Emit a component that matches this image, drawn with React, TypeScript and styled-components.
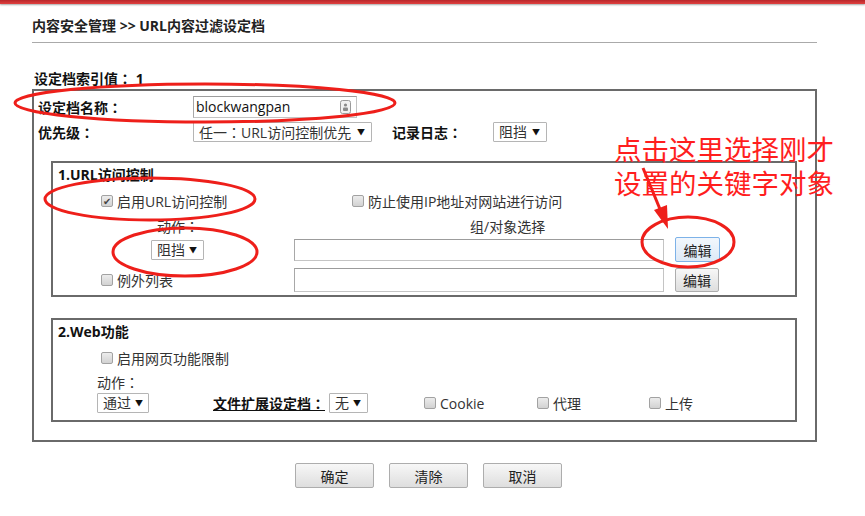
import React from 'react';
import styled, { createGlobalStyle } from 'styled-components';

const GlobalStyle = createGlobalStyle`
  html, body {
    margin: 0;
    padding: 0;
    background: #fff;
  }
  body {
    font-family: "Open Sans", "Noto Sans CJK SC", sans-serif;
    font-size: 14px;
    color: #222;
  }
`;

const Screen = styled.div`
  position: relative;
  width: 865px;
  height: 516px;
  overflow: hidden;
  background: #fff;
`;

const RedBar = styled.div`
  height: 4px;
  background: linear-gradient(#b8262a, #e0403f);
  box-shadow: 0 1px 2px rgba(0, 0, 0, 0.35);
`;

const Page = styled.div`
  width: 785px;
  margin-left: 32px;
`;

const Title = styled.div`
  margin-top: 12px;
  padding-bottom: 6px;
  line-height: 20px;
  font-size: 14px;
  font-weight: bold;
  color: #222;
  border-bottom: 1px solid #aaa;
`;

const IndexLine = styled.div`
  margin-top: 25px;
  padding-left: 2px;
  line-height: 20px;
  font-weight: bold;
  color: #111;
  white-space: pre;
`;

/* full-width colon centred in its box, as the reference font draws it */
const Colon = styled.span`
  font-family: "Noto Sans CJK TC", sans-serif;
`;

const OuterBox = styled.div`
  box-sizing: border-box;
  width: 785px;
  border: 2px solid #6a6a6a;
  padding: 5px 0 18px 4px;
`;

const Row = styled.div<{ $h?: number; $top?: number; $left?: number }>`
  display: flex;
  align-items: center;
  height: ${(p) => p.$h ?? 20}px;
  margin-top: ${(p) => p.$top ?? 0}px;
  padding-left: ${(p) => p.$left ?? 0}px;
`;

const Label = styled.span<{ $w?: number; $ml?: number; $underline?: boolean }>`
  flex: none;
  width: ${(p) => (p.$w ? `${p.$w}px` : 'auto')};
  margin-left: ${(p) => p.$ml ?? 0}px;
  font-weight: bold;
  color: #111;
  white-space: nowrap;
  text-decoration: ${(p) => (p.$underline ? 'underline' : 'none')};
`;

const Text = styled.span<{ $ml?: number }>`
  margin-left: ${(p) => p.$ml ?? 0}px;
  color: #333;
  white-space: nowrap;
`;

const TextInput = styled.div<{ $w: number; $h?: number; $ml?: number }>`
  position: relative;
  box-sizing: border-box;
  flex: none;
  width: ${(p) => p.$w}px;
  height: ${(p) => p.$h ?? 22}px;
  margin-left: ${(p) => p.$ml ?? 0}px;
  padding-left: 2px;
  border: 1px solid #c4c4c4;
  border-top-color: #9c9c9c;
  border-left-color: #a8a8a8;
  background: #fff;
  line-height: 20px;
  color: #111;
  display: flex;
  align-items: center;
  justify-content: space-between;
`;

const FakeSelect = styled.div<{ $w: number; $ml?: number }>`
  box-sizing: border-box;
  flex: none;
  width: ${(p) => p.$w}px;
  height: 20px;
  margin-left: ${(p) => p.$ml ?? 0}px;
  padding: 0 6px 0 5px;
  border: 1px solid #b5b5b5;
  border-radius: 1px;
  background: #fff;
  display: flex;
  align-items: center;
  justify-content: space-between;
  color: #333;
  line-height: 18px;
  white-space: nowrap;
  overflow: hidden;
`;

const Caret = styled.span`
  font-size: 8px;
  color: #111;
  margin-left: 4px;
`;

const Box = styled.div<{ $top: number; $bottom?: number }>`
  box-sizing: border-box;
  width: 746px;
  margin: ${(p) => p.$top}px 0 0 13px;
  border: 2px solid #6a6a6a;
  padding: 3px 0 ${(p) => p.$bottom ?? 3}px 5px;
`;

const BoxTitle = styled.div`
  line-height: 18px;
  font-weight: bold;
  color: #111;
`;

const CheckBox = styled.span<{ $checked?: boolean }>`
  box-sizing: border-box;
  flex: none;
  width: 12px;
  height: 12px;
  margin-right: 4px;
  border: 1px solid #a2a2a2;
  border-radius: 2px;
  background: linear-gradient(#ececec, #d2d2d2);
  display: flex;
  align-items: center;
  justify-content: center;
  font-size: 10px;
  line-height: 1;
  color: #444;
`;

const CheckGroup = styled.span<{ $w?: number; $ml?: number }>`
  display: flex;
  align-items: center;
  flex: none;
  width: ${(p) => (p.$w ? `${p.$w}px` : 'auto')};
  margin-left: ${(p) => p.$ml ?? 0}px;
`;

const Check: React.FC<{ label: string; checked?: boolean; w?: number }> = ({
  label,
  checked,
  w,
}) => (
  <CheckGroup $w={w}>
    <CheckBox $checked={checked}>{checked ? '✔' : null}</CheckBox>
    <Text>{label}</Text>
  </CheckGroup>
);

const Button = styled.button<{ $w: number; $h: number; $ml?: number; $focus?: boolean }>`
  box-sizing: border-box;
  flex: none;
  width: ${(p) => p.$w}px;
  height: ${(p) => p.$h}px;
  margin-left: ${(p) => p.$ml ?? 0}px;
  padding: 0;
  border: 1px solid ${(p) => (p.$focus ? '#7db2e8' : '#adadad')};
  border-radius: 2px;
  background: ${(p) =>
    p.$focus ? 'linear-gradient(#f2f7fd, #dde9f6)' : 'linear-gradient(#f7f7f7, #dedede)'};
  font-family: inherit;
  font-size: 14px;
  color: #222;
`;

const ButtonBar = styled.div`
  display: flex;
  gap: 15px;
  margin-top: 21px;
  padding-left: 263px;
`;

const Overlay = styled.svg`
  position: absolute;
  left: 0;
  top: 0;
  pointer-events: none;
`;

const Note = styled.div`
  position: absolute;
  left: 614px;
  top: 131px;
  font-family: "Noto Sans CJK SC", sans-serif;
  font-size: 27.5px;
  line-height: 34px;
  color: #ff1e1e;
  white-space: nowrap;
`;

const KeyIcon = () => (
  <svg width="11" height="14" viewBox="0 0 11 14" style={{ marginRight: 5 }}>
    <rect x="0.5" y="0.5" width="10" height="13" rx="2" fill="#f1f1f1" stroke="#9a9a9a" />
    <circle cx="5.5" cy="5" r="1.6" fill="#8a8a8a" />
    <rect x="3" y="7.5" width="5" height="3.5" rx="1" fill="#8a8a8a" />
  </svg>
);

const withColon = (text: string) => (
  <>
    {text}
    <Colon>：</Colon>
  </>
);

const App: React.FC = () => {
  return (
    <Screen>
      <GlobalStyle />
      <RedBar />
      <Page>
        <Title>内容安全管理 &gt;&gt; URL内容过滤设定档</Title>
        <IndexLine>
          {withColon('设定档索引值')} 1
        </IndexLine>
        <OuterBox>
          <Row $h={22}>
            <Label $w={155}>{withColon('设定档名称')}</Label>
            <TextInput $w={164}>
              blockwangpan
              <KeyIcon />
            </TextInput>
          </Row>
          <Row $top={4}>
            <Label $w={155}>{withColon('优先级')}</Label>
            <FakeSelect $w={179}>
              <span>任一{withColon('')}URL访问控制优先</span>
              <Caret>▼</Caret>
            </FakeSelect>
            <Label $w={101} $ml={20}>
              {withColon('记录日志')}
            </Label>
            <FakeSelect $w={54}>
              阻挡<Caret>▼</Caret>
            </FakeSelect>
          </Row>

          <Box $top={19}>
            <BoxTitle>1.URL访问控制</BoxTitle>
            <Row $top={7} $left={43}>
              <Check label="启用URL访问控制" checked w={251} />
              <Check label="防止使用IP地址对网站进行访问" />
            </Row>
            <Row $top={5} $left={99}>
              <Text>{withColon('动作')}</Text>
              <Text $ml={271}>组/对象选择</Text>
            </Row>
            <Row $h={25} $top={1} $left={93}>
              <FakeSelect $w={53}>
                阻挡<Caret>▼</Caret>
              </FakeSelect>
              <TextInput $w={370} $ml={90} />
              <Button $w={45} $h={25} $ml={11} $focus>
                编辑
              </Button>
            </Row>
            <Row $h={24} $top={6} $left={43}>
              <Check label="例外列表" w={193} />
              <TextInput $w={370} $h={24} />
              <Button $w={44} $h={24} $ml={11}>
                编辑
              </Button>
            </Row>
          </Box>

          <Box $top={21} $bottom={7}>
            <BoxTitle>2.Web功能</BoxTitle>
            <Row $top={7} $left={43}>
              <Check label="启用网页功能限制" />
            </Row>
            <Row $top={4} $left={39}>
              <Text>{withColon('动作')}</Text>
            </Row>
            <Row $top={1} $left={39}>
              <FakeSelect $w={52}>
                通过<Caret>▼</Caret>
              </FakeSelect>
              <Label $ml={64} $w={116} $underline>
                {withColon('文件扩展设定档')}
              </Label>
              <FakeSelect $w={39}>
                无<Caret>▼</Caret>
              </FakeSelect>
              <CheckGroup $ml={56}>
                <Check label="Cookie" w={113} />
                <Check label="代理" w={112} />
                <Check label="上传" />
              </CheckGroup>
            </Row>
          </Box>
        </OuterBox>

        <ButtonBar>
          <Button $w={79} $h={25}>确定</Button>
          <Button $w={79} $h={25}>清除</Button>
          <Button $w={79} $h={25}>取消</Button>
        </ButtonBar>
      </Page>

      <Overlay width="865" height="516" viewBox="0 0 865 516">
        <g fill="none" stroke="#ee1f1a" strokeWidth="3">
          <ellipse cx="205" cy="103" rx="190" ry="19" />
          <ellipse cx="150" cy="199" rx="105" ry="21" />
          <ellipse cx="185" cy="252" rx="72" ry="24" />
          <ellipse cx="688" cy="242" rx="46" ry="25" />
          <line x1="643" y1="168" x2="662" y2="214" />
        </g>
        <polygon points="668,229 654,210 667,205" fill="#ee1f1a" />
      </Overlay>
      <Note>
        点击这里选择刚才
        <br />
        设置的关键字对象
      </Note>
    </Screen>
  );
};

export default App;
